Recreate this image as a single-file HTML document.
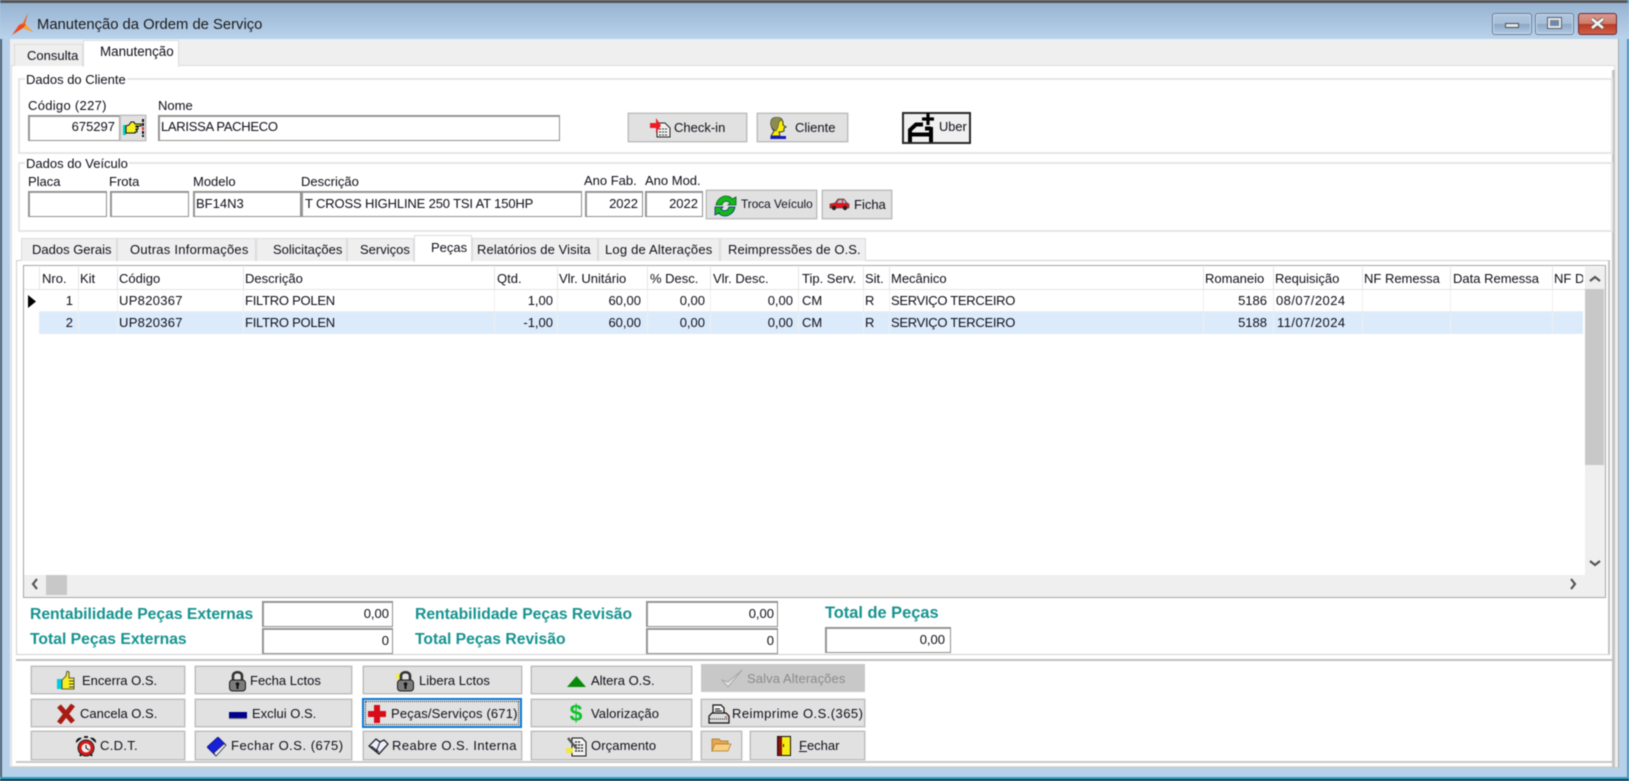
<!DOCTYPE html>
<html><head><meta charset="utf-8">
<style>
html,body{margin:0;padding:0;width:1629px;height:781px;overflow:hidden;background:#b8d1ea}
#r{position:absolute;left:0;top:0;width:1629px;height:781px;overflow:hidden;font:13px/16px "Liberation Sans",sans-serif;color:#0e0e18;filter:blur(.42px)}
#r div,#r svg{position:absolute}
.l{white-space:nowrap;height:16px}
.rt{white-space:nowrap;height:16px;text-align:right;width:120px}
.i{background:#fff;border:1px solid #8f8f8f;box-shadow:inset 1px 1px 0 #9c9c9c;box-sizing:border-box}
.b{background:#e1e1e1;border:1px solid #bcbcbc;box-shadow:0 0 0 .5px #c8c8c8;box-sizing:border-box}
.t{background:#efefef;border:1px solid #dcdcdc;border-bottom:0;box-sizing:border-box}
.gb{border:2px solid #e6e6e6;box-sizing:border-box;background:#fff}
.v{width:1px;background:#e4e4e4;top:267px;height:22px}
.w{width:1px;background:#efefef;top:290px;height:44px}
.lg{font-weight:bold;font-size:15.7px;color:#16938f;white-space:nowrap;height:18px;line-height:18px}
</style></head><body><div id="r">
<!-- frame -->
<div style="left:0;top:0;width:1629px;height:781px;background:#b8d1ea"></div>
<div style="left:0;top:0;width:1629px;height:3px;background:#555"></div>
<div style="left:0;top:0;width:2px;height:781px;background:#4a6070"></div>
<div style="left:1627px;top:0;width:2px;height:781px;background:#4f93b8"></div>
<div style="left:0;top:3px;width:1629px;height:36px;background:linear-gradient(#98b3d1,#b9d3ec)"></div>
<div style="left:0;top:777px;width:1629px;height:2px;background:#24a4c8"></div>
<div style="left:0;top:779px;width:1629px;height:2px;background:#223a48"></div>
<!-- app icon -->
<svg style="left:11px;top:12px" width="23" height="24" viewBox="0 0 23 24"><path d="M17 1 L12 11 L8 13 L1 23 L12 16 L22 20 L14 12Z" fill="#ef4a1c"/><path d="M12 16 L22 20 L15 12.500Z" fill="#f9a22c"/><path d="M17 1 L12 11 L8 13 L13 12Z" fill="#e8781c"/></svg>
<div class="l" style="left:37px;top:17px;font-size:14.8px;color:#1a1a1a">Manutenção da Ordem de Serviço</div>
<!-- window buttons -->
<div style="left:1492px;top:13px;width:40px;height:22px;box-sizing:border-box;border:1px solid #6a7f98;border-radius:3px;background:linear-gradient(#b0c6de 0,#a8bfd9 48%,#8ba6c5 52%,#b3cbe3 100%);box-shadow:inset 0 0 0 1px #c8dbed"></div>
<div style="left:1505px;top:23px;width:14px;height:5px;background:#e6e6e6;border:1px solid #44505e;box-sizing:border-box"></div>
<div style="left:1535px;top:13px;width:39px;height:22px;box-sizing:border-box;border:1px solid #6a7f98;border-radius:3px;background:linear-gradient(#b0c6de 0,#a8bfd9 48%,#8ba6c5 52%,#b3cbe3 100%);box-shadow:inset 0 0 0 1px #c8dbed"></div>
<div style="left:1548px;top:18px;width:13px;height:10px;background:#6f88a6;border:2px solid #e6e6e6;box-sizing:border-box;box-shadow:0 0 0 1px #55626f"></div>
<div style="left:1578px;top:13px;width:39px;height:22px;box-sizing:border-box;border:1px solid #6b2b30;border-radius:3px;background:linear-gradient(#d89a90 0,#cf7c6c 48%,#b83a24 52%,#d0604a 100%)"></div>
<svg style="left:1590px;top:17px" width="15" height="13" viewBox="0 0 15 13"><path d="M2 2 L13 11 M13 2 L2 11" stroke="#444" stroke-width="4.200"/><path d="M2 2 L13 11 M13 2 L2 11" stroke="#f2f2f2" stroke-width="2.800"/></svg>
<!-- client -->
<div style="left:10px;top:39px;width:1609px;height:729px;background:#efefef;border-right:1px solid #a8a8a8;border-bottom:1px solid #c8c8c8;box-sizing:border-box"></div>
<div style="left:11px;top:65px;width:1604px;height:702px;background:#fff;border:1px solid #dcdcdc;box-sizing:border-box"></div>
<div style="left:1612px;top:70px;width:3px;height:697px;background:#c4c4c4"></div>
<div class="t" style="left:14px;top:44px;width:69px;height:22px"></div>
<div class="l" style="left:27px;top:48px">Consulta</div>
<div style="left:83px;top:40px;width:96px;height:27px;background:#fff;border:1px solid #dcdcdc;border-bottom:0;box-sizing:border-box"></div>
<div class="l" style="left:100px;top:44px;font-size:13.4px">Manutenção</div>
<!-- grupo cliente -->
<div class="gb" style="left:18px;top:78px;width:1595px;height:76px"></div>
<div class="l" style="left:25px;top:72px;background:#fff;padding:0 1px">Dados do Cliente</div>
<div class="l" style="left:28px;top:98px;letter-spacing:.3px">Código (227)</div>
<div class="l" style="left:158px;top:98px">Nome</div>
<div class="i" style="left:28px;top:115px;width:92px;height:26px"></div>
<div class="rt" style="left:-5px;top:119px">675297</div>
<div class="b" style="left:120px;top:115px;width:26px;height:26px"></div>
<svg style="left:123px;top:118px" width="22" height="20" viewBox="0 0 22 20"><path d="M0 7h3v10H0z" fill="#0cb"/><path d="M3 8l3-1 2-3h3l1 2h6v2h-5v1h2v2h-2v1h1v2h-2v1H3z" fill="#f4f026" stroke="#111"/><path d="M20 1v3M20 5v3M20 13v3M20 17v2" stroke="#111" stroke-width="2"/><path d="M20 9v3" stroke="#e22" stroke-width="2"/></svg>
<div class="i" style="left:158px;top:115px;width:402px;height:26px"></div>
<div class="l" style="left:161px;top:119px;letter-spacing:-.3px">LARISSA PACHECO</div>
<div class="b" style="left:628px;top:113px;width:119px;height:29px"></div>
<svg style="left:649px;top:118px" width="22" height="20" viewBox="0 0 22 20"><path d="M8 5h8l5 5v9H8z" fill="#f2f2f2" stroke="#222"/><path d="M10 11h9M10 14h9M10 17h9" stroke="#333" stroke-dasharray="2 1"/><path d="M1 5h6V0l5 7.500-5 7.500v-5H1z" fill="#ee1c25"/></svg>
<div class="l" style="left:674px;top:120px">Check-in</div>
<div class="b" style="left:757px;top:113px;width:91px;height:29px"></div>
<svg style="left:769px;top:117px" width="20" height="23" viewBox="0 0 20 23"><path d="M3 2c4-2 10-1 11 3l0 3 3 2-2 1 0 3-3 1-2 0 1 4H2l3-5C2 11 1 5 3 2z" fill="#f8f000" stroke="#333"/><path d="M3 2c3-3 8-2 10 0l-3 3-1 5-2 4C2 12 0 6 3 2z" fill="#8d8c50" stroke="#444" stroke-width=".6"/><path d="M2 19h15v3H1z" fill="#1418c0"/></svg>
<div class="l" style="left:795px;top:120px">Cliente</div>
<div style="left:902px;top:112px;width:69px;height:32px;background:#f0f0f0;border:2px solid #2a2a2a;box-sizing:border-box"></div>
<svg style="left:906px;top:113px" width="30" height="30" viewBox="0 0 30 30"><path d="M22 0v12M16 6h12" stroke="#000" stroke-width="3.200"/><path d="M17 11.500H10L4 17V29M4 21.500h22M25 14v15M19 15.500h6" stroke="#000" stroke-width="4" fill="none"/></svg>
<div class="l" style="left:939px;top:119px;font-size:12.800px">Uber</div>
<!-- grupo veiculo -->
<div class="gb" style="left:18px;top:162px;width:1595px;height:70px"></div>
<div class="l" style="left:25px;top:156px;background:#fff;padding:0 1px">Dados do Veículo</div>
<div class="l" style="left:28px;top:174px">Placa</div>
<div class="l" style="left:109px;top:174px">Frota</div>
<div class="l" style="left:193px;top:174px">Modelo</div>
<div class="l" style="left:301px;top:174px">Descrição</div>
<div class="l" style="left:584px;top:173px">Ano Fab.</div>
<div class="l" style="left:645px;top:173px">Ano Mod.</div>
<div class="i" style="left:28px;top:191px;width:79px;height:26px"></div>
<div class="i" style="left:110px;top:191px;width:79px;height:26px"></div>
<div class="i" style="left:193px;top:191px;width:108px;height:26px"></div>
<div class="i" style="left:301px;top:191px;width:281px;height:26px"></div>
<div class="i" style="left:585px;top:191px;width:58px;height:26px"></div>
<div class="i" style="left:645px;top:191px;width:58px;height:26px"></div>
<div class="l" style="left:196px;top:196px">BF14N3</div>
<div class="l" style="left:305px;top:196px;letter-spacing:-.15px">T CROSS HIGHLINE 250 TSI AT 150HP</div>
<div class="rt" style="left:518px;top:196px">2022</div>
<div class="rt" style="left:578px;top:196px">2022</div>
<div class="b" style="left:706px;top:190px;width:111px;height:29px"></div>
<svg style="left:714px;top:195px" width="23" height="22" viewBox="0 0 23 22"><path d="M2 10C3 4 8 1 12 1c3 0 5 1 6 3l4-2v8h-8l2-2c-3-3-7-2-8 2z" fill="#14b81c" stroke="#0a5a20" stroke-width=".8"/><path d="M21 12c-1 6-6 9-10 9-3 0-5-1-6-3l-4 2v-8h8l-2 2c3 3 7 2 8-2z" fill="#14b81c" stroke="#0a2a80" stroke-width=".8"/></svg>
<div class="l" style="left:741px;top:196px;font-size:11.800px">Troca Veículo</div>
<div class="b" style="left:822px;top:190px;width:70px;height:29px"></div>
<svg style="left:829px;top:198px" width="21" height="13" viewBox="0 0 21 13"><path d="M1 6l5-1 3-4h6l3 4 2 1v4H1z" fill="#e0141c" stroke="#555" stroke-width=".8"/><path d="M8 5l2-3h3v3zM14 5V2h1l2 3z" fill="#9cd"/><circle cx="5" cy="10" r="2.200" fill="#222"/><circle cx="16" cy="10" r="2.200" fill="#222"/></svg>
<div class="l" style="left:854px;top:197px">Ficha</div>
<!-- abas internas -->
<div style="left:16px;top:260px;width:1594px;height:395px;background:#fff;border:1px solid #d0d0d0;border-right:2px solid #c4c4c4;box-sizing:border-box"></div>
<div class="t" style="left:21px;top:238px;width:96px;height:23px"></div>
<div class="t" style="left:117px;top:238px;width:139px;height:23px"></div>
<div class="t" style="left:256px;top:238px;width:91px;height:23px"></div>
<div class="t" style="left:347px;top:238px;width:67px;height:23px"></div>
<div style="left:414px;top:235px;width:58px;height:27px;background:#fff;border:1px solid #dcdcdc;border-bottom:0;box-sizing:border-box"></div>
<div class="t" style="left:472px;top:238px;width:126px;height:23px"></div>
<div class="t" style="left:598px;top:238px;width:122px;height:23px"></div>
<div class="t" style="left:720px;top:238px;width:146px;height:23px"></div>
<div class="l" style="left:32px;top:242px">Dados Gerais</div>
<div class="l" style="left:130px;top:242px;letter-spacing:.25px">Outras Informações</div>
<div class="l" style="left:273px;top:242px">Solicitações</div>
<div class="l" style="left:360px;top:242px">Serviços</div>
<div class="l" style="left:431px;top:240px">Peças</div>
<div class="l" style="left:477px;top:242px;letter-spacing:.1px">Relatórios de Visita</div>
<div class="l" style="left:605px;top:242px;letter-spacing:.2px">Log de Alterações</div>
<div class="l" style="left:728px;top:242px;letter-spacing:.1px">Reimpressões de O.S.</div>
<!-- grid -->
<div style="left:23px;top:265px;width:1583px;height:333px;background:#fff;border:1px solid #a6a6a6;box-sizing:border-box"></div>
<div style="left:24px;top:289px;width:1561px;height:1px;background:#e4e4e4"></div>
<div style="left:39px;top:312px;width:1544px;height:22px;background:#dcebfb"></div>
<div style="left:39px;top:311px;width:1544px;height:1px;background:#efefef"></div>
<div class="v" style="left:39px"></div><div class="v" style="left:78px"></div><div class="v" style="left:117px"></div><div class="v" style="left:243px"></div><div class="v" style="left:494px"></div><div class="v" style="left:557px"></div><div class="v" style="left:647px"></div><div class="v" style="left:710px"></div><div class="v" style="left:798px"></div><div class="v" style="left:863px"></div><div class="v" style="left:889px"></div><div class="v" style="left:1203px"></div><div class="v" style="left:1273px"></div><div class="v" style="left:1362px"></div><div class="v" style="left:1450px"></div><div class="v" style="left:1552px"></div>
<div class="w" style="left:78px"></div><div class="w" style="left:117px"></div><div class="w" style="left:243px"></div><div class="w" style="left:494px"></div><div class="w" style="left:557px"></div><div class="w" style="left:647px"></div><div class="w" style="left:710px"></div><div class="w" style="left:798px"></div><div class="w" style="left:863px"></div><div class="w" style="left:889px"></div><div class="w" style="left:1203px"></div><div class="w" style="left:1273px"></div><div class="w" style="left:1362px"></div><div class="w" style="left:1450px"></div><div class="w" style="left:1552px"></div>
<div class="l" style="left:42px;top:271px">Nro.</div>
<div class="l" style="left:80px;top:271px">Kit</div>
<div class="l" style="left:119px;top:271px">Código</div>
<div class="l" style="left:245px;top:271px">Descrição</div>
<div class="l" style="left:497px;top:271px">Qtd.</div>
<div class="l" style="left:559px;top:271px">Vlr. Unitário</div>
<div class="l" style="left:650px;top:271px">% Desc.</div>
<div class="l" style="left:713px;top:271px">Vlr. Desc.</div>
<div class="l" style="left:802px;top:271px">Tip. Serv.</div>
<div class="l" style="left:865px;top:271px">Sit.</div>
<div class="l" style="left:891px;top:271px">Mecânico</div>
<div class="l" style="left:1205px;top:271px">Romaneio</div>
<div class="l" style="left:1275px;top:271px">Requisição</div>
<div class="l" style="left:1364px;top:271px">NF Remessa</div>
<div class="l" style="left:1453px;top:271px">Data Remessa</div>
<div class="l" style="left:1554px;top:271px;width:29px;overflow:hidden">NF Devolução</div>
<svg style="left:27px;top:295px" width="10" height="13" viewBox="0 0 10 13"><path d="M1 0l8 6.500L1 13z" fill="#000"/></svg>
<!-- linha 1 -->
<div class="rt" style="left:-47px;top:293px">1</div>
<div class="l" style="left:119px;top:293px;letter-spacing:.3px">UP820367</div>
<div class="l" style="left:245px;top:293px;letter-spacing:-.25px">FILTRO POLEN</div>
<div class="rt" style="left:433px;top:293px">1,00</div>
<div class="rt" style="left:521px;top:293px">60,00</div>
<div class="rt" style="left:585px;top:293px">0,00</div>
<div class="rt" style="left:673px;top:293px">0,00</div>
<div class="l" style="left:802px;top:293px">CM</div>
<div class="l" style="left:865px;top:293px">R</div>
<div class="l" style="left:891px;top:293px;letter-spacing:-.3px">SERVIÇO TERCEIRO</div>
<div class="rt" style="left:1147px;top:293px">5186</div>
<div class="l" style="left:1276px;top:293px;letter-spacing:.45px">08/07/2024</div>
<!-- linha 2 -->
<div class="rt" style="left:-47px;top:315px">2</div>
<div class="l" style="left:119px;top:315px;letter-spacing:.3px">UP820367</div>
<div class="l" style="left:245px;top:315px;letter-spacing:-.25px">FILTRO POLEN</div>
<div class="rt" style="left:433px;top:315px">-1,00</div>
<div class="rt" style="left:521px;top:315px">60,00</div>
<div class="rt" style="left:585px;top:315px">0,00</div>
<div class="rt" style="left:673px;top:315px">0,00</div>
<div class="l" style="left:802px;top:315px">CM</div>
<div class="l" style="left:865px;top:315px">R</div>
<div class="l" style="left:891px;top:315px;letter-spacing:-.3px">SERVIÇO TERCEIRO</div>
<div class="rt" style="left:1147px;top:315px">5188</div>
<div class="l" style="left:1277px;top:315px;letter-spacing:.45px">11/07/2024</div>
<!-- scrollbars -->
<div style="left:1585px;top:267px;width:20px;height:330px;background:#efefef"></div>
<div style="left:1585px;top:289px;width:19px;height:176px;background:#c8c8c8"></div>
<svg style="left:1589px;top:275px" width="12" height="8" viewBox="0 0 12 8"><path d="M1 6l5-4 5 4" stroke="#555" stroke-width="2.200" fill="none"/></svg>
<svg style="left:1589px;top:559px" width="12" height="8" viewBox="0 0 12 8"><path d="M1 2l5 4 5-4" stroke="#555" stroke-width="2.200" fill="none"/></svg>
<div style="left:24px;top:575px;width:1581px;height:22px;background:#efefef"></div>
<div style="left:46px;top:575px;width:21px;height:20px;background:#c8c8c8"></div>
<svg style="left:31px;top:578px" width="8" height="12" viewBox="0 0 8 12"><path d="M6 1L2 6l4 5" stroke="#555" stroke-width="2.200" fill="none"/></svg>
<svg style="left:1569px;top:578px" width="8" height="12" viewBox="0 0 8 12"><path d="M2 1l4 5-4 5" stroke="#555" stroke-width="2.200" fill="none"/></svg>
<!-- totais -->
<div class="lg" style="left:30px;top:606px">Rentabilidade Peças Externas</div>
<div class="lg" style="left:30px;top:631px">Total Peças Externas</div>
<div class="i" style="left:262px;top:601px;width:131px;height:26px"></div>
<div class="i" style="left:262px;top:628px;width:131px;height:26px"></div>
<div class="rt" style="left:269px;top:606px">0,00</div>
<div class="rt" style="left:269px;top:633px">0</div>
<div class="lg" style="left:415px;top:606px">Rentabilidade Peças Revisão</div>
<div class="lg" style="left:415px;top:631px">Total Peças Revisão</div>
<div class="i" style="left:646px;top:601px;width:132px;height:26px"></div>
<div class="i" style="left:646px;top:628px;width:132px;height:26px"></div>
<div class="rt" style="left:654px;top:606px">0,00</div>
<div class="rt" style="left:654px;top:633px">0</div>
<div class="lg" style="left:825px;top:604px;font-size:16.400px">Total de Peças</div>
<div class="i" style="left:825px;top:627px;width:126px;height:26px"></div>
<div class="rt" style="left:825px;top:632px">0,00</div>
<!-- painel botoes -->
<div style="left:16px;top:659px;width:1597px;height:104px;background:#fff;border:1px solid #c0c0c0;border-left:0;box-sizing:border-box;border-top:2px solid #c0c0c0;border-bottom:2px solid #c8c8c8"></div>
<!-- linha 1 -->
<div class="b" style="left:31px;top:666px;width:154px;height:28px"></div>
<svg style="left:57px;top:671px" width="18" height="20" viewBox="0 0 18 20"><path d="M0 8h5v10H0z" fill="#0cd"/><path d="M5 9l4-4 1-5 2 1v6h5v11H5z" fill="#f6ee20" stroke="#333" stroke-width=".8"/><path d="M12 10h5M12 13h5M12 16h5" stroke="#444"/></svg>
<div class="l" style="left:82px;top:673px">Encerra O.S.</div>
<div class="b" style="left:195px;top:666px;width:157px;height:28px"></div>
<svg style="left:228px;top:671px" width="19" height="21" viewBox="0 0 19 21"><path d="M5 9V5c0-5 9-5 9 0v4" stroke="#333" stroke-width="2.600" fill="none"/><rect x="1.500" y="9" width="16" height="11" rx="3" fill="#7c7c7c" stroke="#1a1a1a"/><circle cx="9.500" cy="13" r="1.800" fill="#111"/><path d="M8.500 14h2v4h-2z" fill="#111"/></svg>
<div class="l" style="left:250px;top:673px">Fecha Lctos</div>
<div class="b" style="left:363px;top:666px;width:159px;height:28px"></div>
<svg style="left:395px;top:671px" width="20" height="21" viewBox="0 0 20 21"><path d="M1 2l3 2 0-3 1 3 3-1-2 3 2 1-3 0-1 3-1-3-3 0 2-2z" fill="#f6f020"/><path d="M6 9V5c0-5 9-5 9 0v4" stroke="#333" stroke-width="2.600" fill="none"/><rect x="2.500" y="9" width="16" height="11" rx="3" fill="#7c7c7c" stroke="#1a1a1a"/><circle cx="10.500" cy="13" r="1.800" fill="#111"/><path d="M9.500 14h2v4h-2z" fill="#111"/></svg>
<div class="l" style="left:419px;top:673px">Libera Lctos</div>
<div class="b" style="left:531px;top:666px;width:161px;height:28px"></div>
<svg style="left:567px;top:676px" width="19" height="12" viewBox="0 0 19 12"><path d="M9.500 0L19 11H0z" fill="#0a8a0a"/></svg>
<div class="l" style="left:591px;top:673px">Altera O.S.</div>
<div style="left:701px;top:664px;width:164px;height:28px;background:#c8c8c8"></div>
<svg style="left:721px;top:669px" width="22" height="20" viewBox="0 0 22 20"><path d="M1 11l6 7L21 1 7 13z" fill="#e4e4e4" stroke="#a8a8a8"/></svg>
<div class="l" style="left:747px;top:671px;color:#8b8b8b;letter-spacing:.1px">Salva Alterações</div>
<!-- linha 2 -->
<div class="b" style="left:31px;top:699px;width:154px;height:28px"></div>
<svg style="left:57px;top:704px" width="18" height="20" viewBox="0 0 18 20"><path d="M2 2l14 16M16 1L2 19" stroke="#a81c14" stroke-width="5"/></svg>
<div class="l" style="left:80px;top:706px">Cancela O.S.</div>
<div class="b" style="left:195px;top:699px;width:157px;height:28px"></div>
<div style="left:229px;top:712px;width:18px;height:6px;background:#00008c;box-shadow:0 1px 0 #777"></div>
<div class="l" style="left:252px;top:706px">Exclui O.S.</div>
<div style="left:362px;top:698px;width:160px;height:30px;background:#e1e1e1;border:2px solid #0a78d7;box-sizing:border-box"></div>
<div style="left:365px;top:701px;width:154px;height:24px;border:1px dotted #333;box-sizing:border-box"></div>
<svg style="left:368px;top:705px" width="18" height="18" viewBox="0 0 18 18"><path d="M6 0h6v6h6v6h-6v6H6v-6H0V6h6z" fill="#d80c18"/></svg>
<div class="l" style="left:391px;top:706px;letter-spacing:.15px">Peças/Serviços (671)</div>
<div class="b" style="left:531px;top:699px;width:161px;height:28px"></div>
<div class="l" style="left:569px;top:702px;width:14px;height:22px;font:bold 23px/22px 'Liberation Sans',sans-serif;color:#0ec22c;text-align:center">$</div>
<div class="l" style="left:591px;top:706px;letter-spacing:.1px">Valorização</div>
<div class="b" style="left:701px;top:699px;width:164px;height:28px"></div>
<svg style="left:708px;top:704px" width="22" height="20" viewBox="0 0 22 20"><path d="M5 1h8l3 3v6H5z" fill="#f6f6f6" stroke="#111" stroke-width="1.200"/><path d="M7 5h5M7 7h7" stroke="#111"/><path d="M1 12l3-3h14l3 3v7H1z" fill="#dcdcdc" stroke="#111" stroke-width="1.200"/><path d="M2 15h18" stroke="#111" stroke-dasharray="1 1"/><path d="M17 13h2" stroke="#d11"/></svg>
<div class="l" style="left:732px;top:706px;letter-spacing:.45px">Reimprime O.S.(365)</div>
<!-- linha 3 -->
<div class="b" style="left:31px;top:731px;width:154px;height:29px"></div>
<svg style="left:76px;top:736px" width="20" height="21" viewBox="0 0 20 21"><path d="M0 7a4.500 4.500 0 0 1 6-5zM20 7a4.500 4.500 0 0 0-6-5z" fill="#111"/><path d="M8 1h4" stroke="#111" stroke-width="1.800"/><path d="M4 20l2-3M16 20l-2-3" stroke="#111" stroke-width="2"/><circle cx="10" cy="12" r="8" fill="#d81818" stroke="#222"/><circle cx="10" cy="12" r="4.500" fill="#f0f0f0"/><path d="M10 9v3l3 2" stroke="#111" fill="none"/></svg>
<div class="l" style="left:100px;top:738px;letter-spacing:.3px">C.D.T.</div>
<div class="b" style="left:195px;top:731px;width:157px;height:29px"></div>
<svg style="left:207px;top:737px" width="20" height="20" viewBox="0 0 20 20"><path d="M0 10L11 0l8 8L9 19z" fill="#1820d8" stroke="#0a1080" stroke-width=".8"/><path d="M7 16L17 7l2 1L9 19z" fill="#eee" stroke="#333" stroke-width=".6"/></svg>
<div class="l" style="left:231px;top:738px;letter-spacing:.5px">Fechar O.S. (675)</div>
<div class="b" style="left:363px;top:731px;width:159px;height:29px"></div>
<svg style="left:368px;top:737px" width="21" height="19" viewBox="0 0 21 19"><path d="M1 9l7-7 4 3 4-2 4 4-9 10z" fill="#eef" stroke="#111" stroke-width="1.200"/><path d="M12 5l-4 10M3 9l8 6" stroke="#111" fill="none"/></svg>
<div class="l" style="left:392px;top:738px;letter-spacing:.45px">Reabre O.S. Interna</div>
<div class="b" style="left:531px;top:731px;width:161px;height:29px"></div>
<svg style="left:566px;top:736px" width="21" height="21" viewBox="0 0 21 21"><path d="M6 2h10l4 4v14H6z" fill="#f4f4f4" stroke="#111"/><path d="M9 6h6M9 9h8M9 12h8M9 15h8" stroke="#111" stroke-width="1.200" stroke-dasharray="2 1"/><path d="M0 12h7v5H0z" fill="#f0e83a"/><path d="M2 2l9 11" stroke="#555" stroke-width="2.400"/></svg>
<div class="l" style="left:591px;top:738px;letter-spacing:.1px">Orçamento</div>
<div class="b" style="left:701px;top:731px;width:41px;height:29px"></div>
<svg style="left:711px;top:738px" width="21" height="14" viewBox="0 0 21 14"><path d="M1 1h7l2 2h7v3H5L1 13z" fill="#e9a84a" stroke="#9a7030" stroke-width=".7"/><path d="M4 6h16l-3 7H1z" fill="#f8cf80" stroke="#a97a30" stroke-width=".7"/></svg>
<div class="b" style="left:750px;top:731px;width:115px;height:29px"></div>
<svg style="left:777px;top:736px" width="14" height="20" viewBox="0 0 14 20"><path d="M0 0h14v20H0z" fill="#111"/><path d="M1 1h4v18H1z" fill="#8b1010"/><path d="M5 1h8v18H5z" fill="#f6ee10"/><path d="M6 8h1v3H6z" fill="#111"/></svg>
<div class="l" style="left:799px;top:738px"><span style="text-decoration:underline">F</span>echar</div>
</div></body></html>
